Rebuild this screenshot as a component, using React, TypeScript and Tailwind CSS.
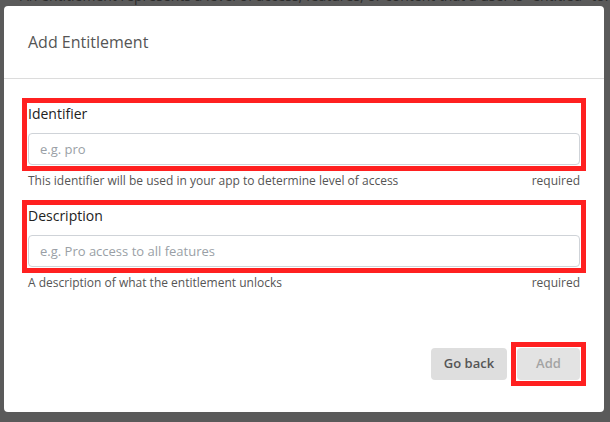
import { useState } from "react";

interface IFieldProps {
  label: string;
  placeholder: string;
  hint: string;
}

const Field = ({ label, placeholder, hint }: IFieldProps) => {
  const [value, setValue] = useState("");
  return (
    <div className="flex flex-col">
      {/* annotation frame drawn as an outline, doesn't affect layout */}
      <div className="flex flex-col outline-[5px] outline-solid outline-[#ff2020] outline-offset-1">
        <label className="text-[14px] leading-[20px] text-[#222]">
          {label}
        </label>
        <input
          value={value}
          onChange={(e) => setValue(e.target.value)}
          placeholder={placeholder}
          className="mt-[9px] h-[32px] w-full rounded-[4px] border border-[#cfd3d8] px-[11px] text-[13px] text-[#333] placeholder:text-[#9a9fa6] outline-none"
        />
      </div>
      <div className="mt-2 flex justify-between text-[12px] leading-[16px] text-[#555]">
        <span>{hint}</span>
        <span>required</span>
      </div>
    </div>
  );
};

const App = () => {
  return (
    <div className="flex h-[422px] w-[610px] flex-col overflow-hidden bg-[#5a5a5a] font-['Open_Sans',sans-serif]">
      <div className="h-[6px] overflow-hidden pl-[20px]">
        <p className="-mt-[14px] whitespace-nowrap text-[14px] leading-[20px] text-[#2c2c2c]">
          An entitlement represents a level of access, features, or content
          that a user is "entitled" to. Many apps only have one entitlement
        </p>
      </div>

      <div className="ml-[4px] flex w-[600px] flex-col rounded-[4px] bg-white">
        <div className="border-b border-[#dcdcdc] px-6 py-6">
          <h2 className="text-[16px] leading-[24px] text-[#555]">
            Add Entitlement
          </h2>
        </div>

        <form
          onSubmit={(e) => e.preventDefault()}
          className="flex flex-col px-6 pt-[25px] pb-8"
        >
          <div className="flex flex-col gap-[17px]">
            <Field
              label="Identifier"
              placeholder="e.g. pro"
              hint="This identifier will be used in your app to determine level of access"
            />
            <Field
              label="Description"
              placeholder="e.g. Pro access to all features"
              hint="A description of what the entitlement unlocks"
            />
          </div>

          <div className="mt-[57px] flex justify-end gap-[10px]">
            <button
              type="button"
              className="h-[32px] w-[76px] rounded-[4px] bg-[#dedede] text-[13px] font-semibold text-[#555]"
            >
              Go back
            </button>
            <div className="flex outline-[5px] outline-solid outline-[#ff2020] outline-offset-[1px]">
              <button
                type="submit"
                disabled
                className="h-[32px] w-[63px] rounded-[4px] bg-[#e3e3e3] text-[13px] font-semibold text-[#a3a3a3]"
              >
                Add
              </button>
            </div>
          </div>
        </form>
      </div>
    </div>
  );
};

export default App;
